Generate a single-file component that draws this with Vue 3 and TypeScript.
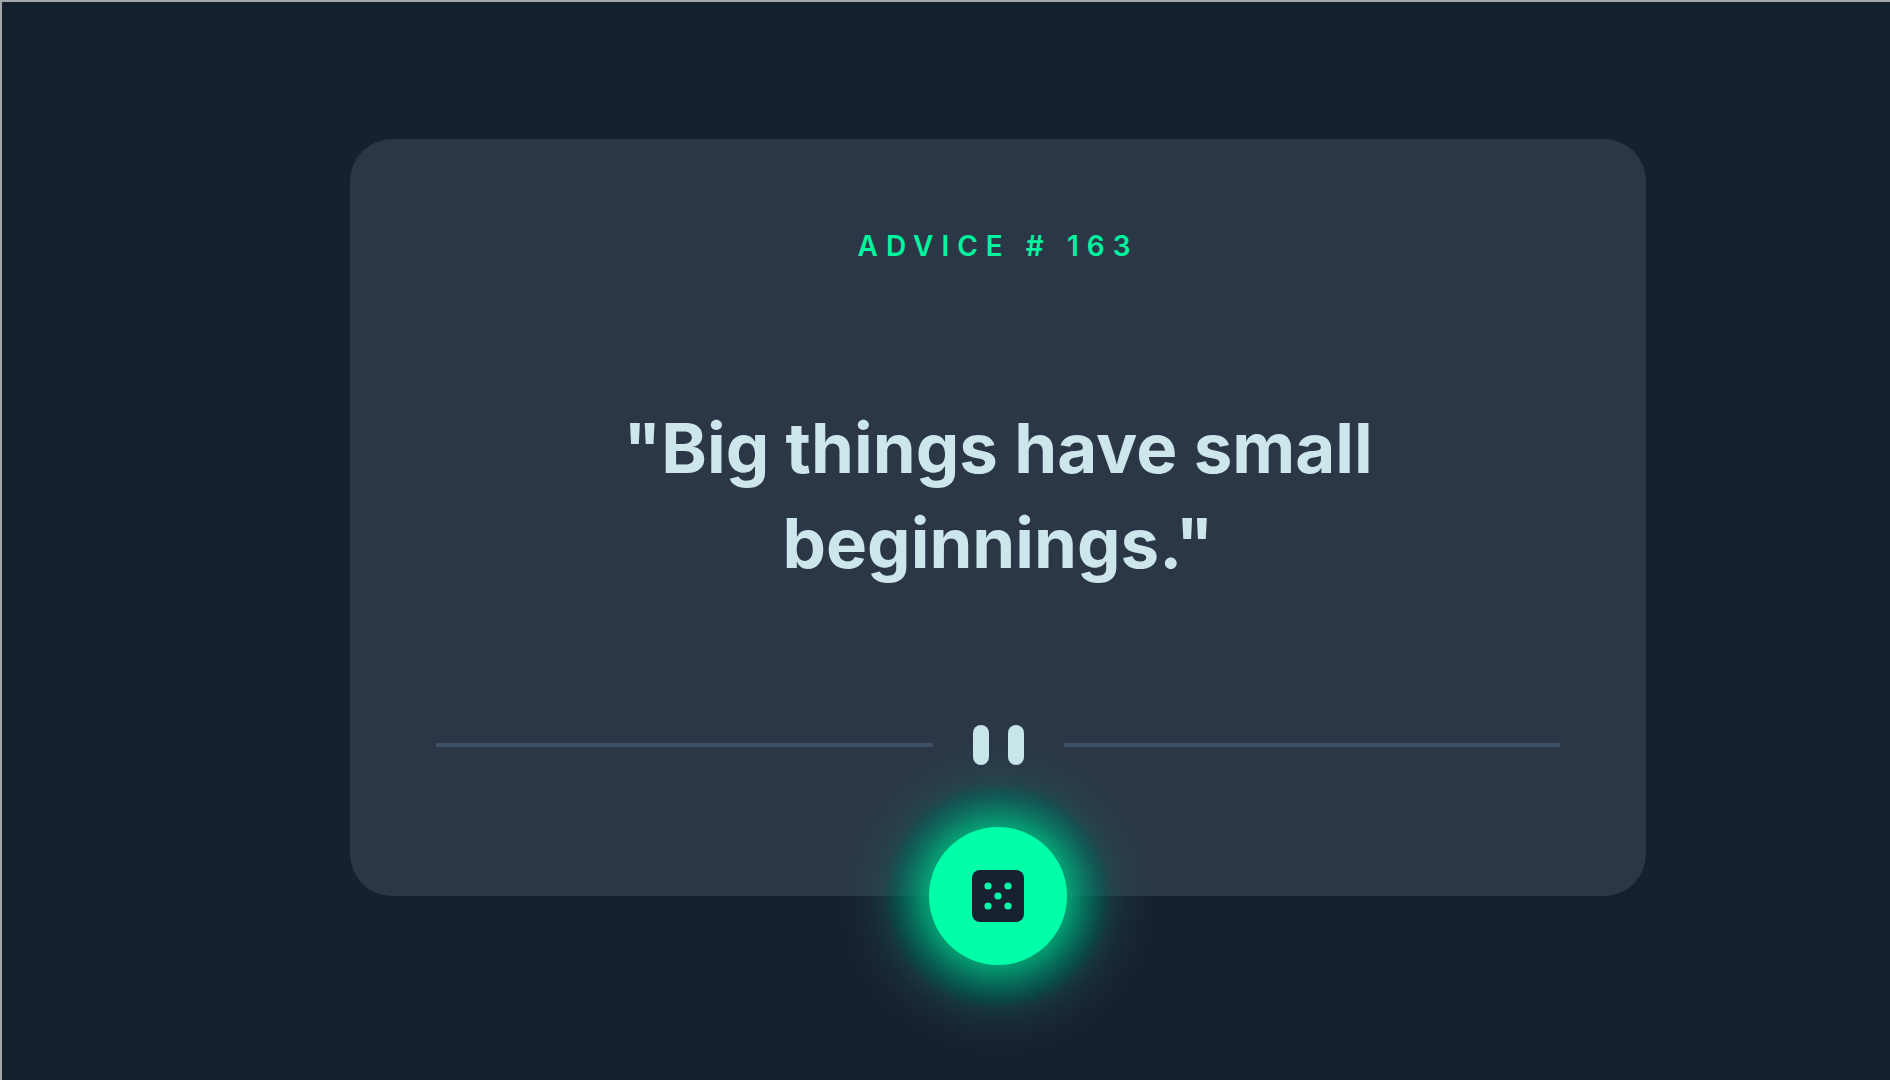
<script setup lang="ts">
import { ref } from 'vue'

interface Advice {
  id: number
  text: string
}

const slips: Advice[] = [{ id: 163, text: 'Big things have small beginnings.' }]
const index = ref(0)

function roll(): void {
  index.value = Math.floor(Math.random() * slips.length)
}
</script>

<template>
  <main class="page">
    <section class="card">
      <h1 class="label">Advice # {{ slips[index].id }}</h1>
      <blockquote class="quote">"{{ slips[index].text }}"</blockquote>
      <div class="divider" aria-hidden="true">
        <span class="line"></span>
        <span class="bar"></span>
        <span class="bar"></span>
        <span class="line"></span>
      </div>
      <div class="glow">
        <button class="dice" type="button" aria-label="New advice" @click="roll">
          <svg viewBox="0 0 52 52" width="52" height="52" aria-hidden="true">
            <rect width="52" height="52" rx="8" fill="#18212f" />
            <g fill="#00ffa8">
              <circle cx="16" cy="16" r="3.6" />
              <circle cx="36" cy="16" r="3.6" />
              <circle cx="26" cy="26" r="3.6" />
              <circle cx="16" cy="36" r="3.6" />
              <circle cx="36" cy="36" r="3.6" />
            </g>
          </svg>
        </button>
      </div>
    </section>
  </main>
</template>

<style>
body {
  margin: 0;
  background: #16212e;
}
</style>

<style scoped>
.page {
  box-sizing: border-box;
  min-height: 100vh;
  padding: 137px 0 100px 104px;
  border-top: 2px solid #a3a8ad;
  border-left: 2px solid #a3a8ad;
  background: #16212e;
  display: flex;
  justify-content: center;
  align-items: flex-start;
  font-family: Inter, "Open Sans", sans-serif;
}

.card {
  box-sizing: border-box;
  position: relative;
  width: 100%;
  max-width: 1296px;
  padding: 86px 86px 131px;
  border-radius: 42px;
  background: #2b3747;
  display: flex;
  flex-direction: column;
  align-items: center;
}

.label {
  margin: 0;
  font-size: 28px;
  line-height: 42px;
  font-weight: 600;
  letter-spacing: 8px;
  text-transform: uppercase;
  color: #00f59f;
}

.quote {
  margin: 134px 0;
  max-width: 960px;
  font-size: 69px;
  line-height: 95px;
  font-weight: 700;
  text-align: center;
  color: #cce6ec;
}

.divider {
  position: relative;
  z-index: 1;
  align-self: stretch;
  display: flex;
  align-items: center;
  gap: 19px;
}

.line {
  flex: 1;
  height: 4px;
  background: #3e4f66;
}

.line:first-child {
  margin-right: 21px;
}

.line:last-child {
  margin-left: 21px;
}

.bar {
  width: 16px;
  height: 40px;
  border-radius: 8px;
  background: #c8e5ea;
}

.glow {
  position: absolute;
  left: 50%;
  bottom: 0;
  transform: translate(-50%, 50%);
  padding: 90px;
  border-radius: 50%;
  pointer-events: none;
  background: radial-gradient(
    circle closest-side,
    rgba(0, 180, 124, 0.85) 43%,
    rgba(0, 164, 118, 0.8) 48%,
    rgba(0, 140, 108, 0.7) 55%,
    rgba(0, 116, 98, 0.6) 62%,
    rgba(0, 106, 92, 0.5) 66%,
    rgba(22, 96, 84, 0.34) 71%,
    rgba(30, 90, 84, 0.19) 79%,
    rgba(40, 80, 82, 0.08) 89%,
    rgba(40, 70, 80, 0) 100%
  );
}

.dice {
  width: 138px;
  height: 138px;
  padding: 0;
  border: 0;
  border-radius: 50%;
  background: #00ffa8;
  display: flex;
  align-items: center;
  justify-content: center;
  cursor: pointer;
  pointer-events: auto;
}

.dice svg {
  display: block;
}
</style>
